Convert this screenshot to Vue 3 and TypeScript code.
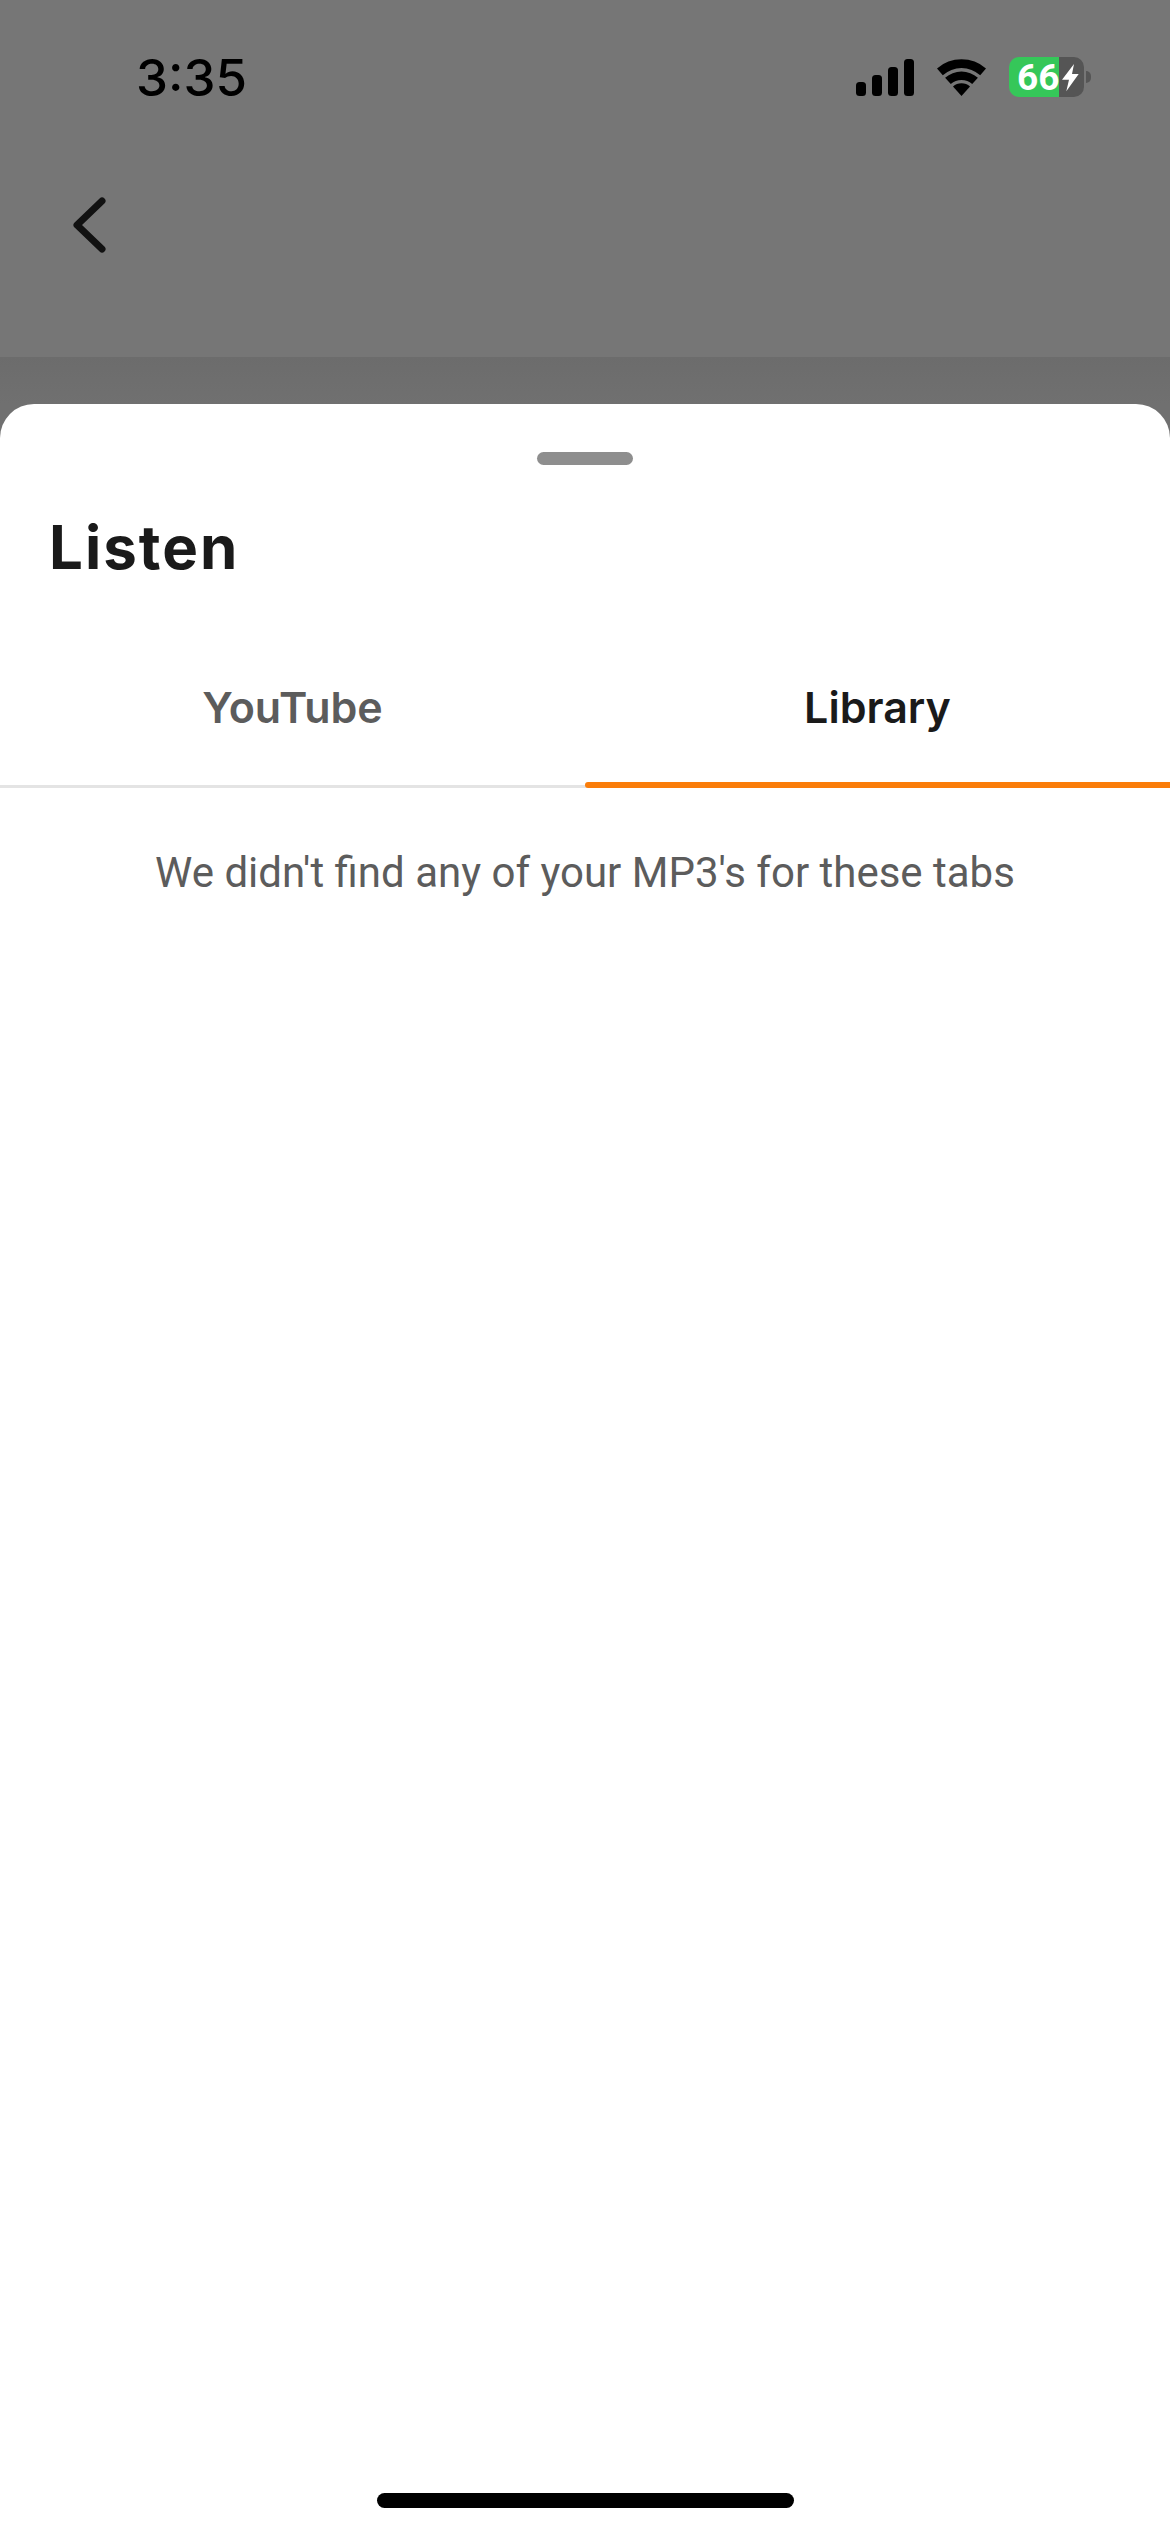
<script setup lang="ts">
import { ref } from 'vue'

const activeTab = ref<string>('Library')
const tabs: string[] = ['YouTube', 'Library']
</script>

<template>
  <div class="screen">
    <div class="backdrop">
      <div class="status-bar">
        <span class="time">3:35</span>
        <div class="status-icons">
          <svg width="58" height="37" viewBox="0 0 58 37">
            <rect x="0" y="23" width="10" height="14" rx="3.5" />
            <rect x="16" y="16" width="10" height="21" rx="3.5" />
            <rect x="32" y="8" width="10" height="29" rx="3.5" />
            <rect x="48" y="0" width="10" height="37" rx="3.5" />
          </svg>
          <svg width="49" height="37" viewBox="0 0 49 37">
            <path d="M0 9.5 A37 37 0 0 1 49 9.5 L43.2 16.2 A28 28 0 0 0 5.8 16.2 Z" />
            <path d="M8.1 18.8 A24.5 24.5 0 0 1 40.9 18.8 L35.2 25.1 A16 16 0 0 0 13.8 25.1 Z" />
            <path d="M16 27.6 A12.7 12.7 0 0 1 33 27.6 L24.5 37 Z" />
          </svg>
          <div class="battery">
            <div class="battery-body">
              <span class="battery-level">66</span>
              <svg width="17" height="29" viewBox="0 0 17 29">
                <path d="M12 1 L0 16.7 H7 L4.3 28.3 L16.7 11 H10 Z" fill="#fff" />
              </svg>
            </div>
            <span class="battery-cap"></span>
          </div>
        </div>
      </div>
      <button class="back" aria-label="Back">
        <svg width="38" height="60" viewBox="0 0 38 60">
          <path d="M33 6 L8 30 L33 54" fill="none" stroke="#111" stroke-width="7" stroke-linecap="round" stroke-linejoin="round" />
        </svg>
      </button>
    </div>
    <div class="backdrop-lower"></div>

    <div class="sheet">
      <div class="handle"></div>
      <h1>Listen</h1>
      <div class="tabs">
        <button
          v-for="tab in tabs"
          :key="tab"
          class="tab"
          :class="{ active: activeTab === tab }"
          @click="activeTab = tab"
        >
          {{ tab }}
        </button>
      </div>
      <p class="empty">We didn't find any of your MP3's for these tabs</p>
      <div class="home-indicator"></div>
    </div>
  </div>
</template>

<style>
html,
body {
  margin: 0;
  background: #fff;
}
</style>

<style scoped>
.screen {
  width: 1170px;
  height: 2532px;
  display: flex;
  flex-direction: column;
  overflow: hidden;
  background: #707070;
  font-family: Inter, "Liberation Sans", sans-serif;
}

.backdrop {
  height: 357px;
  background: #767676;
  flex-shrink: 0;
  overflow: hidden;
}

.backdrop-lower {
  height: 47px;
  background: linear-gradient(#6c6c6c, #707070);
  flex-shrink: 0;
}

.status-bar {
  height: 100px;
  margin-top: 27px;
  padding: 0 79px 0 136px;
  display: flex;
  align-items: center;
  justify-content: space-between;
}

.time {
  font-size: 51px;
  font-weight: 500;
  color: #000;
}

.status-icons {
  display: flex;
  align-items: center;
  gap: 23px;
}

.battery {
  display: flex;
  align-items: center;
  gap: 2px;
}

.battery-body {
  width: 75px;
  height: 40px;
  padding-left: 8px;
  box-sizing: border-box;
  border-radius: 10px;
  background: linear-gradient(90deg, #35c759 0 50px, #555 50px);
  display: flex;
  align-items: center;
  color: #fff;
  font-family: Roboto, sans-serif;
  font-size: 37px;
  font-weight: 700;
}

.battery-level {
  width: 45px;
}

.battery-cap {
  width: 5px;
  height: 12px;
  background: #555;
  border-radius: 0 5px 5px 0;
}

.back {
  display: block;
  margin: 68px 0 0 69px;
  padding: 0;
  border: 0;
  background: none;
  line-height: 0;
}

.sheet {
  flex: 1;
  background: #fff;
  border-radius: 34px 34px 0 0;
  display: flex;
  flex-direction: column;
  position: relative;
}

.handle {
  width: 96px;
  height: 13px;
  margin: 48px auto 0;
  border-radius: 7px;
  background: #8e8e8e;
}

h1 {
  margin: 46px 0 0 49px;
  font-size: 60px;
  line-height: 72px;
  font-weight: 700;
  letter-spacing: 2px;
  color: #1a1a1a;
}

.tabs {
  display: flex;
  margin-top: 75px;
  border-bottom: 3px solid #e4e4e4;
}

.tab {
  flex: 1;
  height: 130px;
  margin-bottom: -3px;
  padding: 0 0 33px;
  border: 0;
  background: none;
  font-family: inherit;
  font-size: 43px;
  font-weight: 600;
  color: #5c5c5c;
  position: relative;
}

.tab.active {
  color: #1a1a1a;
}

.tab.active::after {
  content: '';
  position: absolute;
  left: 0;
  right: 0;
  bottom: 0;
  height: 6px;
  border-radius: 3px 0 0 3px;
  background: #fa7d0a;
}

.empty {
  margin: 60px 0 0;
  text-align: center;
  font-family: Roboto, sans-serif;
  font-size: 42px;
  line-height: 50px;
  color: #5c5c5c;
}

.home-indicator {
  position: absolute;
  left: 377px;
  bottom: 24px;
  width: 417px;
  height: 15px;
  border-radius: 8px;
  background: #000;
}
</style>
